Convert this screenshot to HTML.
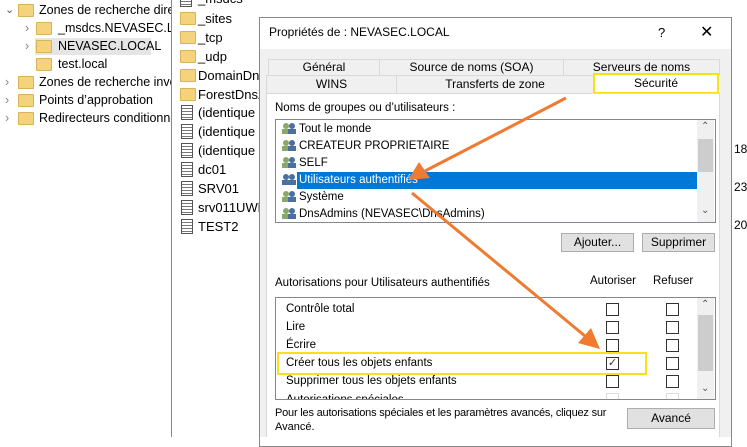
<!DOCTYPE html><html><head><meta charset="utf-8"><style>
*{margin:0;padding:0;box-sizing:border-box}
body{width:747px;height:437px;overflow:hidden;background:#fff;font-family:"Liberation Sans",sans-serif;font-size:12px;color:#000;position:relative}
.a{position:absolute;white-space:nowrap}
.fold{position:absolute;width:16px;height:13px;background:#f5d37c;border:1px solid #d9b25a;border-radius:1px}
.doc{position:absolute;width:12px;height:15px;background:repeating-linear-gradient(#fff 0 2px,#777 2px 3px);border:1px solid #555}
.tab{position:absolute;background:#f0f0f0;border:1px solid #d9d9d9;text-align:center;font-size:12px}
.btn{position:absolute;background:#e1e1e1;border:1px solid #adadad;text-align:center;font-size:12px;line-height:17px}
.cb{position:absolute;width:13px;height:13px;border:1px solid #333;background:#fff}
.dlg{font-size:11.5px}
</style></head><body>
<div class="a" style="left:0;top:0;width:171px;height:437px;overflow:hidden;font-size:12.5px">
<div class="a" style="left:5px;top:3px;font-size:11px;color:#555">⌄</div>
<div class="fold" style="left:18px;top:4px"></div><div class="a" style="left:39px;top:3px">Zones de recherche direc</div>
<div class="a" style="left:25px;top:21px;color:#888">›</div><div class="fold" style="left:36px;top:22px"></div><div class="a" style="left:58px;top:21px">_msdcs.NEVASEC.LO</div>
<div class="a" style="left:35px;top:38px;width:116px;height:17px;background:#e5e5e5"></div>
<div class="a" style="left:25px;top:39px;color:#888">›</div><div class="fold" style="left:36px;top:40px"></div><div class="a" style="left:58px;top:39px">NEVASEC.LOCAL</div>
<div class="fold" style="left:36px;top:58px"></div><div class="a" style="left:58px;top:57px">test.local</div>
<div class="a" style="left:5px;top:75px;color:#888">›</div><div class="fold" style="left:18px;top:76px"></div><div class="a" style="left:39px;top:75px">Zones de recherche inver</div>
<div class="a" style="left:5px;top:93px;color:#888">›</div><div class="fold" style="left:18px;top:94px"></div><div class="a" style="left:39px;top:93px">Points d’approbation</div>
<div class="a" style="left:5px;top:111px;color:#888">›</div><div class="fold" style="left:18px;top:112px"></div><div class="a" style="left:39px;top:111px">Redirecteurs conditionne</div>
</div>
<div class="a" style="left:171px;top:0;width:1px;height:437px;background:#888"></div>
<div class="doc" style="left:180px;top:-8px"></div><div class="a" style="left:198px;top:-9px;font-size:13px">_msdcs</div>
<div class="fold" style="left:180px;top:12px"></div><div class="a" style="left:198px;top:11px;font-size:13px">_sites</div>
<div class="fold" style="left:180px;top:31px"></div><div class="a" style="left:198px;top:30px;font-size:13px">_tcp</div>
<div class="fold" style="left:180px;top:50px"></div><div class="a" style="left:198px;top:49px;font-size:13px">_udp</div>
<div class="fold" style="left:180px;top:69px"></div><div class="a" style="left:198px;top:68px;font-size:13px">DomainDns</div>
<div class="fold" style="left:180px;top:88px"></div><div class="a" style="left:198px;top:87px;font-size:13px">ForestDnsZ</div>
<div class="doc" style="left:181px;top:105px"></div><div class="a" style="left:198px;top:105px;font-size:13px">(identique a</div>
<div class="doc" style="left:181px;top:124px"></div><div class="a" style="left:198px;top:124px;font-size:13px">(identique a</div>
<div class="doc" style="left:181px;top:143px"></div><div class="a" style="left:198px;top:143px;font-size:13px">(identique a</div>
<div class="doc" style="left:181px;top:162px"></div><div class="a" style="left:198px;top:162px;font-size:13px">dc01</div>
<div class="doc" style="left:181px;top:181px"></div><div class="a" style="left:198px;top:181px;font-size:13px">SRV01</div>
<div class="doc" style="left:181px;top:200px"></div><div class="a" style="left:198px;top:200px;font-size:13px">srv011UWh</div>
<div class="doc" style="left:181px;top:219px"></div><div class="a" style="left:198px;top:219px;font-size:13px">TEST2</div>
<div class="a" style="left:734px;top:142px">18:</div><div class="a" style="left:734px;top:180px">23:</div><div class="a" style="left:734px;top:218px">20:</div>
<div class="dlg">
<div class="a" style="left:259px;top:17px;width:473px;height:430px;background:#fff;border:1px solid #888"></div>
<div class="a" style="left:269px;top:25px;font-size:12px">Propriétés de : NEVASEC.LOCAL</div>
<div class="a" style="left:658px;top:25px;font-size:13px">?</div>
<div class="a" style="left:700px;top:22px;font-size:16px">✕</div>
<div class="a" style="left:260px;top:49px;width:471px;height:388px;background:#f0f0f0"></div>
<div class="tab" style="left:268px;top:59px;width:112px;height:17px">Général</div>
<div class="tab" style="left:379px;top:59px;width:185px;height:17px">Source de noms (SOA)</div>
<div class="tab" style="left:563px;top:59px;width:157px;height:17px">Serveurs de noms</div>
<div class="tab" style="left:266px;top:75px;width:131px;height:19px;line-height:17px">WINS</div>
<div class="tab" style="left:396px;top:75px;width:198px;height:19px;line-height:17px">Transferts de zone</div>
<div class="tab" style="left:593px;top:73px;width:126px;height:21px;background:#fff;border:2px solid #f5e21a;line-height:16px">Sécurité</div>
<div class="a" style="left:266px;top:93px;width:454px;height:344px;background:#fff;border:1px solid #d9d9d9;border-bottom:none"></div>
<div class="a" style="left:275px;top:102px">Noms de groupes ou d’utilisateurs :</div>
<div class="a" style="left:275px;top:119px;width:441px;height:104px;border:1px solid #828790;background:#fff"></div>
<div class="a" style="left:697px;top:120px;width:17px;height:102px;background:#f0f0f0"></div>
<div class="a" style="left:698px;top:139px;width:15px;height:33px;background:#cdcdcd"></div>
<div class="a" style="left:701px;top:121px;font-size:10px;color:#555">⌃</div>
<div class="a" style="left:701px;top:205px;font-size:10px;color:#555">⌄</div>
<div class="a" style="left:297px;top:172px;width:400px;height:17px;background:#0078d7"></div>
<svg class="a" style="left:281px;top:122px" width="18" height="100"><g fill="#8aa86a"><circle cx="5" cy="4" r="3"/><rect x="1" y="7" width="8" height="5"/><circle cx="5" cy="21" r="3"/><rect x="1" y="24" width="8" height="5"/><circle cx="5" cy="38" r="3"/><rect x="1" y="41" width="8" height="5"/><circle cx="5" cy="89" r="3"/><rect x="1" y="92" width="8" height="5"/><circle cx="5" cy="72" r="3"/><rect x="1" y="75" width="8" height="5"/></g><g fill="#4a6fa0"><circle cx="11" cy="4" r="3"/><rect x="7" y="7" width="8" height="5"/><circle cx="11" cy="21" r="3"/><rect x="7" y="24" width="8" height="5"/><circle cx="11" cy="38" r="3"/><rect x="7" y="41" width="8" height="5"/><circle cx="11" cy="55" r="3"/><rect x="7" y="58" width="8" height="5"/><circle cx="11" cy="72" r="3"/><rect x="7" y="75" width="8" height="5"/><circle cx="11" cy="89" r="3"/><rect x="7" y="92" width="8" height="5"/><circle cx="5" cy="55" r="3"/><rect x="1" y="58" width="8" height="5"/></g></svg>
<div class="a" style="left:299px;top:123px">Tout le monde</div>
<div class="a" style="left:299px;top:140px">CREATEUR PROPRIETAIRE</div>
<div class="a" style="left:299px;top:157px">SELF</div>
<div class="a" style="left:299px;top:174px;color:#fff">Utilisateurs authentifiés</div>
<div class="a" style="left:299px;top:191px">Système</div>
<div class="a" style="left:299px;top:208px">DnsAdmins (NEVASEC\DnsAdmins)</div>
<div class="btn" style="left:561px;top:233px;width:73px;height:19px">Ajouter...</div>
<div class="btn" style="left:642px;top:233px;width:73px;height:19px">Supprimer</div>
<div class="a" style="left:275px;top:277px">Autorisations pour Utilisateurs authentifiés</div>
<div class="a" style="left:590px;top:275px">Autoriser</div>
<div class="a" style="left:653px;top:275px">Refuser</div>
<div class="a" style="left:275px;top:297px;width:441px;height:103px;border:1px solid #828790;background:#fff"></div>
<div class="a" style="left:697px;top:298px;width:17px;height:101px;background:#f0f0f0"></div>
<div class="a" style="left:698px;top:315px;width:15px;height:56px;background:#cdcdcd"></div>
<div class="a" style="left:701px;top:299px;font-size:10px;color:#555">⌃</div>
<div class="a" style="left:701px;top:383px;font-size:10px;color:#555">⌄</div>
<div class="a" style="left:286px;top:303px">Contrôle total</div>
<div class="a" style="left:286px;top:321px">Lire</div>
<div class="a" style="left:286px;top:339px">Écrire</div>
<div class="a" style="left:286px;top:357px">Créer tous les objets enfants</div>
<div class="a" style="left:286px;top:375px">Supprimer tous les objets enfants</div>
<div class="a" style="left:286px;top:393px;height:6px;overflow:hidden;line-height:14px">Autorisations spéciales</div>
<div class="cb" style="left:606px;top:303px"></div><div class="cb" style="left:666px;top:303px"></div>
<div class="cb" style="left:606px;top:321px"></div><div class="cb" style="left:666px;top:321px"></div>
<div class="cb" style="left:606px;top:339px"></div><div class="cb" style="left:666px;top:339px"></div>
<div class="cb" style="left:606px;top:357px;font-size:11px;line-height:11px;text-align:center;color:#333">✓</div><div class="cb" style="left:666px;top:357px"></div>
<div class="cb" style="left:606px;top:375px"></div><div class="cb" style="left:666px;top:375px"></div>
<div class="a" style="left:606px;top:393px;width:13px;height:6px;border:1px solid #ddd;border-bottom:none"></div><div class="a" style="left:666px;top:393px;width:13px;height:6px;border:1px solid #ddd;border-bottom:none"></div>
<div class="a" style="left:277px;top:352px;width:370px;height:23px;border:2px solid #f5e21a"></div>
<div class="a" style="left:275px;top:407px;font-size:11px;letter-spacing:-0.2px">Pour les autorisations spéciales et les paramètres avancés, cliquez sur</div>
<div class="a" style="left:275px;top:421px;font-size:11px">Avancé.</div>
<div class="btn" style="left:627px;top:408px;width:88px;height:21px;line-height:19px">Avancé</div>
</div>
<svg class="a" style="left:0;top:0" width="747" height="437"><g stroke="#f07a30" stroke-width="3" fill="#f07a30"><line x1="566" y1="98" x2="425" y2="171"/><polygon points="408,180 419,162 430,178" stroke="none"/><line x1="412" y1="193" x2="585" y2="336"/><polygon points="600,349 578,343 591,328" stroke="none"/></g></svg>
</body></html>
